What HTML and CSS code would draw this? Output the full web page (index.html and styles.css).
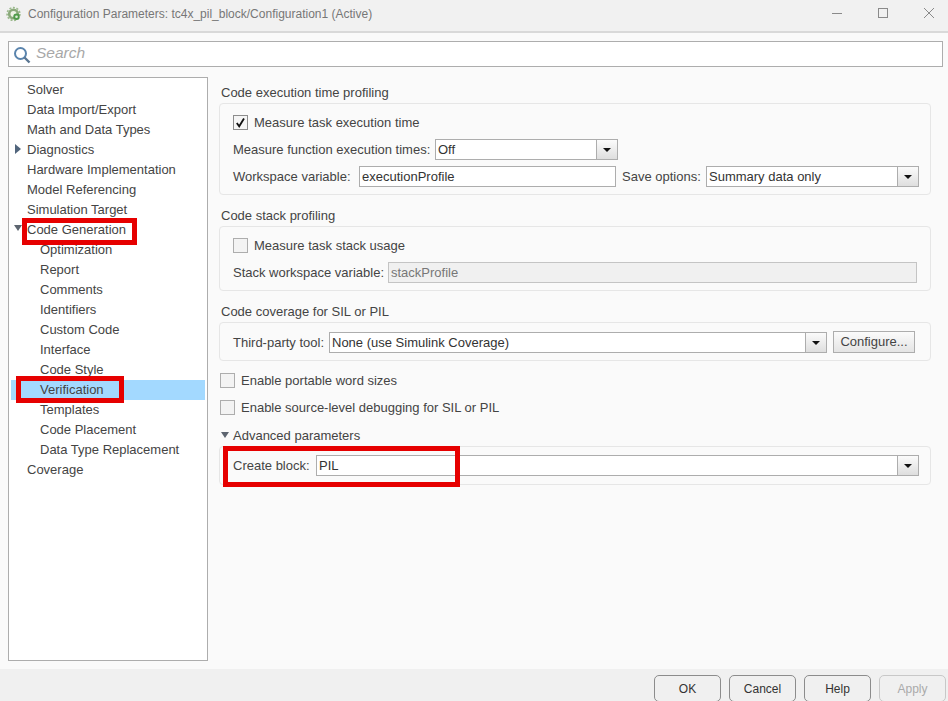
FILE: index.html
```html
<!DOCTYPE html>
<html lang="en">
<head>
<meta charset="utf-8">
<title>Configuration Parameters</title>
<link rel="stylesheet" href="styles.css">
</head>
<body>
<div class="window">
  <header class="titlebar">
    <svg class="logo" width="16" height="16" viewBox="0 0 16 16">
      <circle cx="7.5" cy="8" r="5.6" fill="#8aa97a"/>
      <circle cx="7.5" cy="8" r="6.4" fill="none" stroke="#9bb98c" stroke-width="1.6" stroke-dasharray="2 1.6"/>
      <circle cx="7.5" cy="8" r="3" fill="#eef3e6"/>
      <circle cx="10.5" cy="10.8" r="3.2" fill="#4f9a4a"/>
      <circle cx="10.5" cy="10.8" r="1.3" fill="#dfeeda"/>
    </svg>
    <span class="title">Configuration Parameters: tc4x_pil_block/Configuration1 (Active)</span>
    <div class="winbtns">
      <svg width="12" height="12" viewBox="0 0 12 12"><path d="M1 6.5H11" stroke="#8a8a8a" fill="none"/></svg>
      <svg width="12" height="12" viewBox="0 0 12 12"><rect x="1.5" y="1.5" width="9" height="9" stroke="#8a8a8a" fill="none"/></svg>
      <svg width="12" height="12" viewBox="0 0 12 12"><path d="M1 1L11 11M11 1L1 11" stroke="#8a8a8a" fill="none"/></svg>
    </div>
  </header>

  <div class="searchbar">
    <svg class="searchicon" width="18" height="18" viewBox="0 0 18 18">
      <circle cx="7.5" cy="7.5" r="5.5" fill="none" stroke="#5a84ad" stroke-width="2"/>
      <path d="M11.5 11.5L16.5 16.5" stroke="#5a7692" stroke-width="2.4" fill="none"/>
    </svg>
    <span class="searchtext">Search</span>
  </div>

  <main class="body">
    <nav class="tree">
      <div class="node">Solver</div>
      <div class="node">Data Import/Export</div>
      <div class="node">Math and Data Types</div>
      <div class="node"><span class="arrow-right"></span>Diagnostics</div>
      <div class="node">Hardware Implementation</div>
      <div class="node">Model Referencing</div>
      <div class="node">Simulation Target</div>
      <div class="node"><span class="arrow-down tree-arrow"></span>Code Generation</div>
      <div class="node child">Optimization</div>
      <div class="node child">Report</div>
      <div class="node child">Comments</div>
      <div class="node child">Identifiers</div>
      <div class="node child">Custom Code</div>
      <div class="node child">Interface</div>
      <div class="node child">Code Style</div>
      <div class="node child selected">Verification</div>
      <div class="node child">Templates</div>
      <div class="node child">Code Placement</div>
      <div class="node child">Data Type Replacement</div>
      <div class="node">Coverage</div>
    </nav>

    <section class="content">
      <h2 class="heading">Code execution time profiling</h2>
      <div class="panel panel-time">
        <label class="check"><span class="box checked"><svg width="13" height="13" viewBox="0 0 13 13"><path d="M2.8 7L5.2 10.3L10 2.5" fill="none" stroke="#111" stroke-width="1.8"/></svg></span>Measure task execution time</label>
        <div class="row row-func">
          <span class="lbl lbl-func">Measure function execution times:</span>
          <div class="combo combo-off"><span class="val">Off</span><span class="drop"><i class="tri"></i></span></div>
        </div>
        <div class="row row-work">
          <span class="lbl lbl-work">Workspace variable:</span>
          <div class="input input-work">executionProfile</div>
          <span class="lbl lbl-save">Save options:</span>
          <div class="combo combo-save"><span class="val">Summary data only</span><span class="drop"><i class="tri"></i></span></div>
        </div>
      </div>

      <h2 class="heading heading-next">Code stack profiling</h2>
      <div class="panel panel-stack">
        <label class="check"><span class="box"></span>Measure task stack usage</label>
        <div class="row row-stack">
          <span class="lbl lbl-stack">Stack workspace variable:</span>
          <div class="input input-stack">stackProfile</div>
        </div>
      </div>

      <h2 class="heading heading-next">Code coverage for SIL or PIL</h2>
      <div class="panel panel-cov">
        <div class="row">
          <span class="lbl lbl-third">Third-party tool:</span>
          <div class="combo combo-third"><span class="val">None (use Simulink Coverage)</span><span class="drop"><i class="tri"></i></span></div>
          <div class="btn-config">Configure...</div>
        </div>
      </div>

      <label class="check check-outer check-first"><span class="box"></span>Enable portable word sizes</label>
      <label class="check check-outer check-second"><span class="box"></span>Enable source-level debugging for SIL or PIL</label>

      <h2 class="heading heading-adv"><span class="arrow-down adv-arrow"></span>Advanced parameters</h2>
      <div class="panel panel-adv">
        <div class="row">
          <span class="lbl lbl-block">Create block:</span>
          <div class="combo combo-block"><span class="val">PIL</span><span class="drop"><i class="tri"></i></span></div>
        </div>
      </div>
    </section>
  </main>

  <footer class="footer">
    <div class="fbtn">OK</div>
    <div class="fbtn">Cancel</div>
    <div class="fbtn">Help</div>
    <div class="fbtn disabled">Apply</div>
  </footer>

  <div class="mark mark-codegen"></div>
  <div class="mark mark-verif"></div>
  <div class="mark mark-block"></div>
</div>
</body>
</html>
```
FILE: styles.css
```css
* { box-sizing: border-box; }
html, body { margin: 0; padding: 0; }
body { width: 948px; height: 701px; overflow: hidden; background: #fafafa; }
.window {
  position: relative;
  width: 948px;
  height: 701px;
  display: flex;
  flex-direction: column;
  overflow: hidden;
  font: 13px/20px "Liberation Sans", Arial, sans-serif;
  color: #444;
  background: #fafafa;
}

/* title bar */
.titlebar {
  height: 33px;
  flex: none;
  display: flex;
  align-items: center;
  padding: 0 13px 4px 6px;
  background: #f1f1f1;
  border-bottom: 2px solid #d9d9d9;
}
.logo { flex: none; margin-right: 6px; }
.title { font-size: 12px; color: #777; }
.winbtns { margin: -2px 0 0 auto; display: flex; gap: 34px; }

/* search */
.searchbar {
  flex: none;
  height: 26px;
  margin: 8px 5px 0 8px;
  padding-left: 4px;
  display: flex;
  align-items: center;
  background: #fff;
  border: 1px solid #adadad;
}
.searchicon { margin: 1px 5px 0 0; }
.searchtext { font-size: 15.5px; font-style: italic; color: #a8a8a8; position: relative; top: -1px; }

/* body */
.body {
  flex: 1;
  min-height: 0;
  display: flex;
  padding: 10px 17px 8px 8px;
  gap: 11px;
}
.tree {
  flex: none;
  width: 200px;
  padding: 2px;
  background: #fff;
  border: 1px solid #adadad;
}
.node {
  position: relative;
  height: 20px;
  padding-left: 16px;
  line-height: 19px;
}
.child { padding-left: 29px; }
.selected { background: #a3d9ff; }
.arrow-right {
  position: absolute;
  left: 4px;
  top: 4px;
  border-left: 6px solid #51657c;
  border-top: 5px solid transparent;
  border-bottom: 5px solid transparent;
}
.arrow-down {
  display: inline-block;
  border-top: 6px solid #5d6570;
  border-left: 4.5px solid transparent;
  border-right: 4.5px solid transparent;
}
.tree-arrow { position: absolute; left: 3px; top: 5px; }

/* right column */
.content { flex: 1; min-width: 0; display: flex; flex-direction: column; }
.heading {
  margin: 6px 0 0 2px;
  height: 19px;
  font-size: 13px;
  font-weight: normal;
  line-height: 20px;
}
.heading-next { margin-top: 11px; }
.panel {
  margin-top: 1px;
  padding: 11px 13px 0;
  background: #fafafa;
  border: 1px solid #e6e6e6;
  border-radius: 4px;
}
.panel-time { height: 92px; }
.panel-stack { height: 65px; }
.panel-cov { height: 39px; padding-top: 9px; }
.panel-adv { height: 39px; padding-top: 8px; }
.row { display: flex; align-items: center; height: 21px; }
.row-func { margin-top: 9px; }
.row-work { margin-top: 6px; }
.row-stack { margin-top: 9px; }
.lbl { flex: none; white-space: nowrap; }
.lbl-func { width: 202px; }
.lbl-work { width: 126px; }
.lbl-save { width: 84px; margin-left: 6px; }
.lbl-stack { width: 155px; }
.lbl-third { width: 96px; }
.lbl-block { width: 83px; }
.check { display: flex; align-items: center; height: 15px; }
.box {
  flex: none;
  width: 15px;
  height: 15px;
  margin-right: 6px;
  display: flex;
  align-items: center;
  justify-content: center;
  background: #f3f3f3;
  border: 1px solid #adadad;
}
.checked { background: #f5f5f5; border-color: #8c8c8c; }
.check-outer { margin-left: 1px; }
.check-first { margin-top: 12px; }
.check-second { margin-top: 12px; }
.heading-adv {
  margin: 11px 0 0 2px;
  display: flex;
  align-items: flex-start;
}
.adv-arrow { margin: 6px 4px 0 0; }
.combo, .input {
  height: 21px;
  background: #fff;
  border: 1px solid #adadad;
  color: #333;
  white-space: nowrap;
}
.combo { display: flex; flex: none; }
.val { flex: 1; padding-left: 2px; line-height: 19px; }
.drop {
  flex: none;
  width: 21px;
  display: flex;
  align-items: center;
  justify-content: center;
  border-left: 1px solid #adadad;
  background: linear-gradient(#fbfbfb, #dedede);
}
.tri {
  display: block;
  border-top: 4px solid #111;
  border-left: 4px solid transparent;
  border-right: 4px solid transparent;
}
.combo-off { width: 183px; }
.input { line-height: 19px; padding-left: 2px; }
.input-work { flex: none; width: 257px; }
.combo-save { width: 213px; }
.input-stack { flex: none; width: 529px; background: #f0f0f0; color: #777; border-color: #c4c4c4; }
.combo-third { width: 498px; }
.combo-block { width: 603px; }
.btn-config {
  flex: none;
  width: 82px;
  height: 22px;
  margin: -1px 0 0 6px;
  text-align: center;
  line-height: 19px;
  color: #444;
  background: linear-gradient(#fbfbfb, #e4e4e4);
  border: 1px solid #adadad;
}

/* footer */
.footer {
  flex: none;
  height: 32px;
  padding: 6px 2px 0 0;
  display: flex;
  justify-content: flex-end;
  gap: 8px;
  background: #f0f0f0;
}
.fbtn {
  width: 67px;
  height: 27px;
  text-align: center;
  line-height: 26px;
  color: #333;
  border: 1px solid #8c8c8c;
  border-radius: 5px;
  font-size: 12px;
}
.disabled { color: #aaa; border-color: #c8c8c8; }

/* red annotations over the screenshot */
.mark { position: absolute; border: 5px solid #e60000; }
.mark-codegen { left: 22px; top: 218px; width: 115px; height: 27px; }
.mark-verif { left: 16px; top: 376px; width: 108px; height: 27px; }
.mark-block { left: 223px; top: 446px; width: 237px; height: 41px; }
```
